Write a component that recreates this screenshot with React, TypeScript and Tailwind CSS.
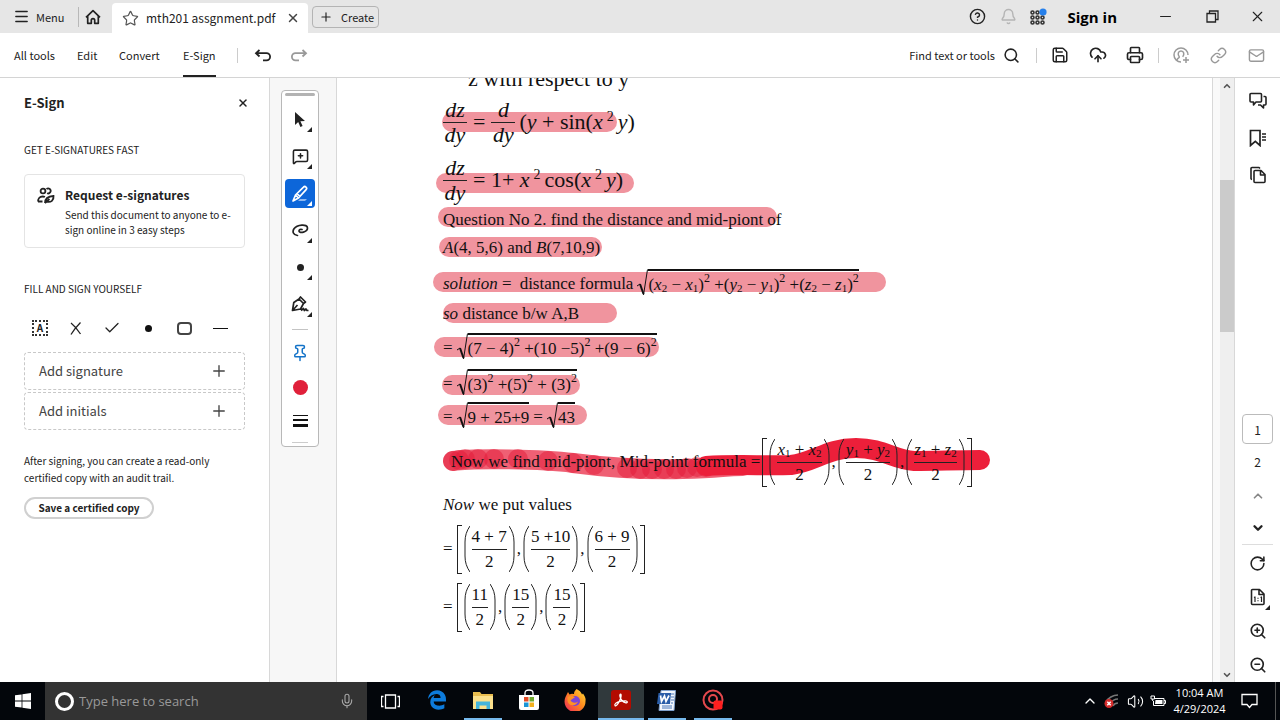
import type { ReactNode } from 'react'
import {
  Bell,
  Check,
  ChevronDown,
  ChevronUp,
  CircleHelp,
  CloudUpload,
  Link,
  Mail,
  Menu,
  MessageSquarePlus,
  Mic,
  Minus,
  Pin,
  Plus,
  Printer,
  RotateCw,
  Save,
  Search,
  Star,
  Volume2,
  X,
  ZoomIn,
  ZoomOut,
} from 'lucide-react'
import { FaEdgeLegacy } from 'react-icons/fa6'

const uiFont = "font-['Noto_Sans_CJK_SC','Open_Sans',sans-serif]"
const docFont = "font-['Liberation_Serif',serif]"

export default function App() {
  return (
    <div className={`flex min-h-screen flex-col bg-white text-[#222] ${uiFont}`}>
      <TitleBar />
      <Toolbar />
      <main className="flex flex-1">
        <SignPanel />
        <ToolPalette />
        <DocumentPage />
        <ScrollBar />
        <PageRail />
      </main>
      <Taskbar />
    </div>
  )
}

function TitleBar() {
  return (
    <header className="flex h-[33px] items-center whitespace-nowrap bg-[#e6e6e6]">
      <button className="flex w-[78px] items-center gap-[6px] pl-[13px] text-[11px] leading-4">
        <Menu size={17} />
        Menu
      </button>
      <span className="h-5 w-px bg-[#b8b8b8]" />
      <button aria-label="Home" className="flex w-[33px] justify-center pr-[5px]">
        <svg width="16" height="16" viewBox="0 0 16 16" fill="none" stroke="currentColor" strokeWidth="1.7" strokeLinejoin="round">
          <path d="M1 8.3 8 1.7l7 6.6M2.7 7v7.3h3.6v-3a1.7 1.7 0 0 1 3.4 0v3h3.6V7" />
        </svg>
      </button>
      <div className="flex h-[30px] w-[196px] items-center self-end rounded-t bg-white pl-[10px] pr-2">
        <Star size={17} strokeWidth={1.7} className="text-[#555]" />
        <span className="flex-1 pl-[7px] text-[12px] leading-4">mth201 assgnment.pdf</span>
        <button aria-label="Close tab">
          <X size={14} strokeWidth={2.5} className="text-[#444]" />
        </button>
      </div>
      <button className="ml-1 flex h-[22px] w-[67px] items-center gap-2 rounded border border-[#b4b4b4] pl-[6px] text-[11px] leading-4">
        <Plus size={14} />
        Create
      </button>
      <div className="ml-auto flex items-center">
        <button aria-label="Help" className="mr-[14px]"><CircleHelp size={17} /></button>
        <button aria-label="Notifications" className="mr-[13px]"><Bell size={17} className="text-[#b5b5b5]" /></button>
        <button aria-label="Apps" className="mr-5">
          <AppsIcon />
        </button>
        <button className="mr-10 font-['Open_Sans'] text-[15px] font-bold leading-5 text-black">Sign in</button>
        <button aria-label="Minimize" className="mr-8"><Minus size={17} strokeWidth={1.6} /></button>
        <button aria-label="Restore" className="mr-[30px]">
          <svg width="13" height="13" viewBox="0 0 13 13" fill="none" stroke="currentColor" strokeWidth="1.3">
            <path d="M1 3.5h8.5V12H1zM3.5 3V1H12v8.5H9.7" />
          </svg>
        </button>
        <button aria-label="Close" className="mr-[14px]"><X size={17} strokeWidth={1.6} /></button>
      </div>
    </header>
  )
}

function AppsIcon() {
  const dots = [3, 8, 13]
  return (
    <svg width="17" height="18" viewBox="0 0 17 18" fill="none" stroke="#333" strokeWidth="1.6">
      {dots.map((y) => dots.map((x) => <circle key={`${x}-${y}`} cx={x - 0.5} cy={y + 1.5} r="1.5" />))}
      <circle cx="13" cy="4" r="3.6" fill="#2680eb" stroke="none" />
    </svg>
  )
}

function Toolbar() {
  return (
    <nav className="flex h-[45px] items-center whitespace-nowrap border-b border-[#d4d4d4] pl-[14px] text-[11px] leading-4">
      <button className="w-[63px] text-left">All tools</button>
      <button className="w-[42px] text-left">Edit</button>
      <button className="w-16 text-left">Convert</button>
      <button className="h-full border-b-2 border-[#222] pt-[2px]">E-Sign</button>
      <span className="ml-[21px] h-[15px] w-px bg-[#ccc]" />
      <button aria-label="Undo" className="ml-4">
        <UndoIcon />
      </button>
      <button aria-label="Redo" className="ml-[18px] -scale-x-100 text-[#999]">
        <UndoIcon />
      </button>
      <button className="ml-auto flex items-center gap-2">
        Find text or tools
        <Search size={17} strokeWidth={2.2} />
      </button>
      <span className="ml-4 h-[15px] w-px bg-[#ccc]" />
      <button aria-label="Save" className="ml-[14px]"><Save size={18} /></button>
      <button aria-label="Upload" className="ml-5"><CloudUpload size={18} strokeWidth={2.2} /></button>
      <button aria-label="Print" className="ml-[19px]"><Printer size={18} strokeWidth={2.2} /></button>
      <span className="ml-[14px] h-[15px] w-px bg-[#ccc]" />
      <button aria-label="Invite" className="ml-[14px] text-[#999]">
        <svg width="17" height="17" viewBox="0 0 17 17" fill="none" stroke="currentColor" strokeWidth="1.5">
          <path d="M8 15A7 7 0 1 1 15 8M4 13.2c0-2 2.3-2 2.3-3.3C4.4 7.5 5 4 8 4s3.6 3.5 1.7 5.9M13 10v6M10 13h6" />
        </svg>
      </button>
      <button aria-label="Copy link" className="ml-5 text-[#999]"><Link size={17} /></button>
      <button aria-label="Email" className="ml-[21px] mr-[15px] text-[#999]"><Mail size={17} /></button>
    </nav>
  )
}

function UndoIcon() {
  return (
    <svg width="18" height="13" viewBox="0 0 18 13" fill="none" stroke="currentColor" strokeWidth="1.8">
      <path d="M5.5 1 2 4.2l3.5 3.3M2 4.2h10.500a3.6 3.6 0 0 1 0 7.2H9" />
    </svg>
  )
}

function SignPanel() {
  return (
    <aside className="flex w-[270px] shrink-0 flex-col whitespace-nowrap border-r border-[#d8d8d8] px-6">
      <div className="mt-4 flex h-[18px] items-center justify-between">
        <h2 className="text-[13px] font-bold leading-[18px]">E-Sign</h2>
        <button aria-label="Close panel" className="-mr-1"><X size={12} strokeWidth={3} /></button>
      </div>
      <h3 className="mt-[30px] text-[10px] leading-4">GET E-SIGNATURES FAST</h3>
      <button className="mt-4 flex h-[74px] items-start gap-[10px] rounded border border-[#e4e4e4] pl-3 pt-3 text-left">
        <PeopleIcon />
        <span>
          <strong className="block text-[12px] font-bold leading-4">Request e-signatures</strong>
          <span className="mt-1 block text-[10px] leading-[15px]">
            Send this document to anyone to e-
            <br />
            sign online in 3 easy steps
          </span>
        </span>
      </button>
      <h3 className="mt-[33px] text-[10px] leading-4">FILL AND SIGN YOURSELF</h3>
      <div className="mt-[21px] flex h-5 items-center">
        <FillButton label="Text">
          <span className="flex h-4 w-4 items-center justify-center border-2 border-dotted border-[#333] text-[10px] font-bold leading-3">A</span>
        </FillButton>
        <FillButton label="Cross">
          <svg width="12" height="13" viewBox="0 0 12 13" stroke="currentColor" strokeWidth="1.3" fill="none">
            <path d="M1 1q5 4 9.5 11M10.500.5Q5 6 1 12.500" />
          </svg>
        </FillButton>
        <FillButton label="Check mark"><Check size={18} strokeWidth={1.7} /></FillButton>
        <FillButton label="Dot"><span className="h-[7px] w-[7px] rounded-full bg-[#111]" /></FillButton>
        <FillButton label="Rounded box"><span className="h-[13px] w-[15px] rounded border-2 border-[#444]" /></FillButton>
        <FillButton label="Line"><span className="h-px w-[15px] bg-[#111]" /></FillButton>
      </div>
      <AddButton label="Add signature" className="mt-[14px]" />
      <AddButton label="Add initials" className="mt-[2px]" />
      <p className="mt-[22px] text-[10px] leading-[17px]">
        After signing, you can create a read-only
        <br />
        certified copy with an audit trail.
      </p>
      <button className="mt-[11px] h-[22px] w-[130px] rounded-full border-2 border-[#d0d0d0] text-[10px] font-bold leading-4">
        Save a certified copy
      </button>
    </aside>
  )
}

function FillButton({ label, children }: { label: string; children: ReactNode }) {
  return (
    <button aria-label={label} className="mr-1 flex w-8 shrink-0 items-center justify-center">
      {children}
    </button>
  )
}

function AddButton({ label, className }: { label: string; className: string }) {
  return (
    <button className={`flex h-[38px] items-center justify-between rounded border border-dashed border-[#c8c8c8] pl-[14px] pr-4 text-[13px] leading-4 text-[#444] ${className}`}>
      {label}
      <Plus size={18} strokeWidth={1.8} />
    </button>
  )
}

function PeopleIcon() {
  return (
    <svg width="18" height="17" viewBox="0 0 18 17" fill="none" stroke="currentColor" strokeWidth="1.8" className="shrink-0">
      <circle cx="6" cy="4" r="2.4" />
      <path d="M9.5 2a2.5 2.500 0 1 1 .6 4.200M1 14.500c0-3 2-5 4.500-5 1 0 1.800.2 2.400.6M1 14.500h4.500" />
      <path d="M8 16c0-4 2.500-6.500 8.500-7 .5 4.500-2.500 6.500-6.500 5.800M8 16l4.500-4" />
    </svg>
  )
}

function ToolPalette() {
  return (
    <div className="w-[66px] shrink-0 bg-[#f7f7f7] pl-[11px] pt-3">
      <div className="flex h-[357px] w-[38px] flex-col items-center rounded border border-[#b8b8b8] bg-white pt-[2px]">
        <span className="h-[3px] w-[30px] rounded-full bg-[#b3b3b3]" />
        <div className="mt-[5px] flex flex-col">
          <Tool label="Select">
            <svg width="12" height="16" viewBox="0 0 12 16" fill="currentColor">
              <path d="M1 0v13l3.200-3 2.200 5 2.200-1-2.200-4.800 4.600-.2z" />
            </svg>
          </Tool>
          <Tool label="Add comment"><MessageSquarePlus size={17} strokeWidth={2.2} /></Tool>
          <Tool label="Highlight" active>
            <svg width="18" height="18" viewBox="0 0 18 18" fill="none" stroke="currentColor" strokeWidth="1.7" strokeLinejoin="round">
              <path d="M9 14h7l-2 2H7z" fill="#8fb8f0" stroke="none" />
              <path d="M4.500 10 12.500 2.200a1.600 1.600 0 0 1 2.600 2.400L7.500 13zM4.500 10 2 16l5.500-3M6 8.700 9 11.500" />
            </svg>
          </Tool>
          <Tool label="Draw">
            <svg width="17" height="13" viewBox="0 0 17 13" fill="none" stroke="currentColor" strokeWidth="1.7" strokeLinecap="round">
              <path d="M5.500 11.500C1 11 .2 7.500 2 4.800 5 .5 15.500-.5 15.500 4c0 4-8 6-8.500 3 0-1.500 1.500-2 3-1.500" />
            </svg>
          </Tool>
          <Tool label="Dot"><span className="h-[7px] w-[7px] rounded-full bg-[#222]" /></Tool>
          <Tool label="Sign">
            <svg width="18" height="17" viewBox="0 0 18 17" fill="none" stroke="currentColor" strokeWidth="1.7" strokeLinejoin="round">
              <path d="m1.500 14.500 1.300-8L8 3l4.500 4.500L9.500 13zM8 3l1.500-2 5 5-2 1.500M1.500 14.500 6.500 9M10 14.500l2.500-2 .8 2 1.700-1.500 1 1.500h1.500" />
            </svg>
          </Tool>
        </div>
        <span className="mt-[6px] h-px w-4 bg-[#c4c4c4]" />
        <button aria-label="Pin" className="mt-[6px] flex h-[34px] items-center text-[#1473c8]">
          <Pin size={18} />
        </button>
        <button aria-label="Color" className="flex h-[34px] items-center">
          <span className="h-[15px] w-[15px] rounded-full bg-[#e0203a]" />
        </button>
        <button aria-label="Thickness" className="flex h-[34px] flex-col justify-center gap-[3px]">
          <span className="h-px w-[15px] bg-[#111]" />
          <span className="h-[2px] w-[15px] bg-[#111]" />
          <span className="h-[3px] w-[15px] bg-[#111]" />
        </button>
        <span className="mt-1 h-px w-4 bg-[#ccc]" />
      </div>
    </div>
  )
}

function Tool({ label, active, children }: { label: string; active?: boolean; children: ReactNode }) {
  return (
    <button
      aria-label={label}
      className={`relative my-1 flex h-[29px] w-[30px] items-center justify-center rounded-sm ${active ? 'bg-[#0d66d9] text-white' : ''}`}
    >
      {children}
      <Corner className="absolute bottom-[2px] right-[3px]" />
    </button>
  )
}

function Corner({ className }: { className: string }) {
  return (
    <svg width="5" height="5" viewBox="0 0 5 5" fill="currentColor" className={className}>
      <path d="M5 0v5H0z" />
    </svg>
  )
}

function DocumentPage() {
  return (
    <article className={`relative min-w-0 flex-1 overflow-hidden border-x border-[#d8d8d8] text-[17px] leading-5 text-[#111] ${docFont}`}>
      <Highlights />
      <div className="relative whitespace-nowrap pl-[106px]">
        <Row className="h-[14px] pl-[25px] text-[22px]">
          <span className="mb-3">z with respect to y</span>
        </Row>
        <Row className="h-[60px] text-[22px]">
          <Fraction top={<i>dz</i>} bottom={<i>dy</i>} className="w-6" />
          <span className="mx-[6px]">=</span>
          <Fraction top={<i>d</i>} bottom={<i>dy</i>} className="w-6" />
          <span className="ml-1">
            (<i>y</i> + sin(<i>x</i>
            <BigSup>2</BigSup>
            <i>y</i>)
          </span>
        </Row>
        <Row className="h-14 text-[22px]">
          <Fraction top={<i>dz</i>} bottom={<i>dy</i>} className="w-6" />
          <span className="ml-[6px]">
            = 1+ <i>x</i>
            <BigSup>2</BigSup>cos(<i>x</i>
            <BigSup>2</BigSup>
            <i>y</i>)
          </span>
        </Row>
        <Row className="h-6">Question No 2. find the distance and mid-piont of</Row>
        <Row className="h-8">
          <span>
            <i>A</i>(4, 5,6) and <i>B</i>(7,10,9)
          </span>
        </Row>
        <Row className="h-10">
          <span>
            <i>solution</i> =
          </span>
          <span className="ml-2 mr-1">distance formula</span>
          <Root>
            <Diff v="x" /> +<Diff v="y" /> +<Diff v="z" />
          </Root>
        </Row>
        <Row className="h-5">
          <span>
            <i>so</i> distance b/w A,B
          </span>
        </Row>
        <Row className="h-12">
          <span className="mr-1">=</span>
          <Root>
            (7 − 4)<Sup>2</Sup> +(10 −5)<Sup>2</Sup> +(9 − 6)<Sup>2</Sup>
          </Root>
        </Row>
        <Row className="h-6">
          <span className="mr-1">=</span>
          <Root>
            (3)<Sup>2</Sup> +(5)<Sup>2</Sup> + (3)<Sup>2</Sup>
          </Root>
        </Row>
        <Row className="h-[42px]">
          <span className="mr-1">=</span>
          <Root>9 + 25+9</Root>
          <span className="mx-1">=</span>
          <Root>43</Root>
        </Row>
        <Row className="h-12 pl-2">
          <span className="mr-[2px]">Now we find mid-piont, Mid-point formula =</span>
          <Triple items={[<Sum v="x" />, <Sum v="y" />, <Sum v="z" />]} />
        </Row>
        <Row className="h-[38px]">
          <span>
            <i>Now</i> we put values
          </span>
        </Row>
        <Row className="h-[50px]">
          <span className="mr-1">=</span>
          <Triple items={['4 + 7', '5 +10', '6 + 9']} />
        </Row>
        <Row className="h-[66px]">
          <span className="mr-1">=</span>
          <Triple items={['11', '15', '15']} />
        </Row>
      </div>
    </article>
  )
}

function Row({ className, children }: { className: string; children: ReactNode }) {
  return <div className={`flex items-center ${className}`}>{children}</div>
}

function Sup({ children }: { children: ReactNode }) {
  return <sup className="-top-2 text-[12px] leading-none">{children}</sup>
}

function BigSup({ children }: { children: ReactNode }) {
  return <sup className="-top-2 mx-1 text-[14px] leading-none">{children}</sup>
}

function Sub({ children }: { children: ReactNode }) {
  return <sub className="text-[11px] leading-none">{children}</sub>
}

// (v2 - v1) squared
function Diff({ v }: { v: string }) {
  return (
    <>
      (<i>{v}</i>
      <Sub>2</Sub> − <i>{v}</i>
      <Sub>1</Sub>)<Sup>2</Sup>
    </>
  )
}

function Sum({ v }: { v: string }) {
  return (
    <>
      <i>{v}</i>
      <Sub>1</Sub> + <i>{v}</i>
      <Sub>2</Sub>
    </>
  )
}

function Fraction({ top, bottom, className }: { top: ReactNode; bottom: ReactNode; className: string }) {
  return (
    <span className={`flex shrink-0 flex-col items-center ${className}`}>
      <span className="h-6 leading-6">{top}</span>
      <span className="h-px w-full bg-[#222]" />
      <span className="h-6 leading-6">{bottom}</span>
    </span>
  )
}

function Root({ children }: { children: ReactNode }) {
  return (
    <span className="mb-1 flex h-[27px]">
      <svg width="11" height="27" viewBox="0 0 11 27" fill="none" stroke="#111">
        <path d="m0 17 3-2" />
        <path d="m3 15 3.500 10" strokeWidth="2" />
        <path d="M6.500 26 10.500.5" />
      </svg>
      <span className="border-t-2 border-[#111] pt-1 leading-5">{children}</span>
    </span>
  )
}

function Triple({ items }: { items: ReactNode[] }) {
  return (
    <span className="flex items-center">
      <Bracket />
      {items.map((item, index) => (
        <span key={index} className="flex items-center">
          <Paren />
          <Fraction top={item} bottom="2" className="mx-[2px]" />
          <Paren flip />
          {index < items.length - 1 && <span className="mx-[2px]">,</span>}
        </span>
      ))}
      <Bracket flip />
    </span>
  )
}

function Bracket({ flip }: { flip?: boolean }) {
  return <span className={`h-[49px] w-[5px] border-y border-[#222] ${flip ? 'ml-[2px] border-r' : 'mr-[2px] border-l'}`} />
}

function Paren({ flip }: { flip?: boolean }) {
  return (
    <svg width="6" height="48" viewBox="0 0 6 48" fill="none" stroke="#222" className={flip ? '-scale-x-100' : ''}>
      <path d="M6 1C2.500 6 1 11 1 17v14c0 6 1.500 11 5 16" />
    </svg>
  )
}

const marks = [
  { x1: 442, x2: 617, y: 122 },
  { x1: 436, x2: 634, y: 183 },
  { x1: 438, x2: 777, y: 217 },
  { x1: 439, x2: 602, y: 247 },
  { x1: 433, x2: 886, y: 282 },
  { x1: 443, x2: 617, y: 313 },
  { x1: 434, x2: 659, y: 347 },
  { x1: 442, x2: 580, y: 385 },
  { x1: 438, x2: 587, y: 415 },
]

const dabs = [
  [453, 461], [459, 460], [465, 459], [478, 459], [494, 459], [518, 459], [548, 461], [573, 463], [594, 465],
  [627, 468], [640, 469], [652, 469], [664, 469], [676, 469], [687, 468], [697, 467], [706, 467],
]

// Freehand marker strokes, drawn in window coordinates
function Highlights() {
  return (
    <svg width="876" height="604" viewBox="337 78 876 604" fill="none" strokeLinecap="round" strokeLinejoin="round" className="absolute left-0 top-0">
      {marks.map((mark) => (
        <path key={mark.y} d={`M${mark.x1 + 10} ${mark.y}H${mark.x2 - 10}`} stroke="#f0949e" strokeWidth="20" />
      ))}
      <path d="M453 461c20-3 90-2 120 2s70 7 110 6 40-3 60-3" stroke="#ef6074" strokeWidth="20" />
      {dabs.map(([x, y]) => (
        <circle key={x} cx={x} cy={y} r="10" fill="#e31937" fillOpacity="0.5" />
      ))}
      <path d="M706 466c30-2 60 0 85-1 24-3 36-17 65-17 27 0 38 12 58 13 20 0 45-1 66-1" stroke="#ec1f3a" strokeWidth="20" />
    </svg>
  )
}

function ScrollBar() {
  return (
    <div className="flex w-[22px] shrink-0 border-r border-[#d8d8d8] bg-[#f9f9f9] pl-[7px]">
      <div className="flex w-[14px] flex-col items-center bg-[#efefef] pb-[2px] pt-[3px]">
        <ChevronUp size={10} strokeWidth={4} className="text-[#555]" />
        <span className="mt-[89px] h-[152px] w-full bg-[#cbcbcb]" />
        <ChevronDown size={10} strokeWidth={4} className="mt-auto text-[#555]" />
      </div>
    </div>
  )
}

function PageRail() {
  return (
    <aside className="flex w-[45px] shrink-0 flex-col items-center text-[12px]">
      <div className="flex flex-col items-center gap-[19px] pt-[14px]">
        <button aria-label="Comments">
          <svg width="18" height="18" viewBox="0 0 18 18" fill="none" stroke="currentColor" strokeWidth="1.6" strokeLinejoin="round">
            <path d="M2 1.500h9.500a1 1 0 0 1 1 1V9a1 1 0 0 1-1 1H7l-2.500 3V10H2a1 1 0 0 1-1-1V2.500a1 1 0 0 1 1-1z" />
            <path d="M14.500 4.500H16a1 1 0 0 1 1 1V12a1 1 0 0 1-1 1h-1.500v3l-3-3H9" />
          </svg>
        </button>
        <button aria-label="Bookmarks">
          <svg width="18" height="18" viewBox="0 0 18 18" fill="none" stroke="currentColor" strokeWidth="1.7">
            <path d="M1.500 1.500h9.500v15l-4.700-4.200-4.800 4.200z" />
            <path d="M13 5h4M13 8h4M13 11h4" strokeWidth="1.3" />
          </svg>
        </button>
        <button aria-label="Pages">
          <svg width="18" height="18" viewBox="0 0 18 18" fill="none" stroke="currentColor" strokeWidth="1.6" strokeLinejoin="round">
            <path d="M6 4.500h6l4 4v7a1 1 0 0 1-1 1H6a1 1 0 0 1-1-1v-10a1 1 0 0 1 1-1zM11.500 5v4H16" />
            <path d="M3 13.500a1.300 1.300 0 0 1-1-1V2.500a1 1 0 0 1 1-1h7l1 1" />
          </svg>
        </button>
      </div>
      <input aria-label="Page number" defaultValue="1" className="mt-auto block h-[30px] w-[31px] rounded border border-[#bbb] text-center leading-4 outline-none" />
      <span className="mt-[10px] leading-4">2</span>
      <button aria-label="Previous page" className="mt-[19px] text-[#888]"><ChevronUp size={14} strokeWidth={3} /></button>
      <button aria-label="Next page" className="mt-[18px]"><ChevronDown size={14} strokeWidth={4} /></button>
      <span className="mt-[9px] h-px w-[31px] bg-[#ddd]" />
      <button aria-label="Rotate" className="mt-[10px]"><RotateCw size={17} strokeWidth={2.2} /></button>
      <button aria-label="Actual size" className="relative mt-4">
        <svg width="16" height="18" viewBox="0 0 16 18" fill="none" stroke="currentColor" strokeWidth="1.6" strokeLinejoin="round">
          <path d="M2.500 1.500h7l4.500 4.500v9.500a1 1 0 0 1-1 1H2.500a1 1 0 0 1-1-1v-13a1 1 0 0 1 1-1zM9 2v4.500h4.500" />
          <path d="M4 9.500 5 9v5M10.500 9.500l1-.5v5M8 9.700v1M8 12.300v1" strokeWidth="1.2" />
        </svg>
        <Corner className="absolute -bottom-1 -right-1" />
      </button>
      <button aria-label="Zoom in" className="mt-4"><ZoomIn size={18} strokeWidth={2.2} /></button>
      <button aria-label="Zoom out" className="mb-2 mt-4"><ZoomOut size={18} strokeWidth={2.2} /></button>
    </aside>
  )
}

function Taskbar() {
  return (
    <footer className="flex h-[38px] items-stretch bg-[#03060b] font-['Open_Sans','Noto_Sans',sans-serif] text-white">
      <button aria-label="Start" className="flex w-[45px] items-center justify-center">
        <svg width="16" height="16" viewBox="0 0 16 16" fill="#fff">
          <path d="M0 2.300 6.600 1.400v6.200H0zM7.400 1.300 16 0v7.600H7.400zM0 8.400h6.600v6.200L0 13.700zM7.400 8.400H16V16l-8.600-1.200z" />
        </svg>
      </button>
      <label className="flex w-[322px] items-center bg-[#333] pl-[10px] pr-3">
        <span className="h-[19px] w-[19px] rounded-full border-[3px] border-white" />
        <input aria-label="Search" placeholder="Type here to search" className="ml-[5px] min-w-0 flex-1 bg-transparent text-[13px] leading-5 outline-none placeholder:text-[#999]" />
        <Mic size={16} strokeWidth={1.6} className="text-[#aaa]" />
      </label>
      <button aria-label="Task view" className="flex w-[47px] items-center justify-center">
        <svg width="19" height="15" viewBox="0 0 19 15" fill="none" stroke="#fff" strokeWidth="1.3">
          <path d="M4.500 1h10v13h-10zM2.500 2.500h-2v10h2M16.500 2.500h2v10h-2" />
        </svg>
      </button>
      <TaskApp label="Edge"><FaEdgeLegacy size={20} className="text-[#0d7bdc]" /></TaskApp>
      <TaskApp label="File Explorer" open>
        <svg width="22" height="20" viewBox="0 0 22 20">
          <path d="M1 2h7l1.500 2H21v15H1z" fill="#e9bd4f" />
          <path d="M1 6h20v13H1z" fill="#fbe08c" />
          <path d="M4 19v-7.500h14V19h-3.500v-3.500h-7V19z" fill="#45b5dc" />
        </svg>
      </TaskApp>
      <TaskApp label="Store">
        <svg width="22" height="22" viewBox="0 0 22 22">
          <path d="M7 7V4q0-3 4-3t4 3v3" fill="none" stroke="#fff" strokeWidth="1.3" />
          <path d="M1 6h20v13q0 2-2 2H3q-2 0-2-2z" fill="#fff" />
          <path d="M6 8h4.500v4.500H6z" fill="#e24b26" />
          <path d="M11.500 8H16v4.500h-4.500z" fill="#6ea82d" />
          <path d="M6 13.500h4.500V18H6z" fill="#1a94d6" />
          <path d="M11.500 13.500H16V18h-4.500z" fill="#f2b01e" />
        </svg>
      </TaskApp>
      <TaskApp label="Firefox">
        <svg width="22" height="22" viewBox="0 0 22 22">
          <defs>
            <linearGradient id="fox" x1="1" y1="0" x2="0" y2="1">
              <stop offset="0" stopColor="#ffe03a" />
              <stop offset="0.45" stopColor="#ff8a1e" />
              <stop offset="1" stopColor="#f0245c" />
            </linearGradient>
          </defs>
          <path d="M12.500 0c4 2 4.500 3.500 5.500 5.500l1-1C21 7.500 22 9.500 21.500 12A10.500 10.500 0 1 1 1.500 8L4 3l1.500 2.500C8 4 9.500 5 10 5c0-2 1-3.500 2.500-5z" fill="url(#fox)" />
          <circle cx="11" cy="12" r="5" fill="#7b45d8" />
          <path d="M3.500 8c3-2 5.500-1.500 7.500.5-2 .5-2.500 2-4.500 2.500 1 3 5 3.500 7.500 1.500-1.500 5-9.500 5-10.500-.5z" fill="#ff9126" />
        </svg>
      </TaskApp>
      <TaskApp label="Acrobat" open active>
        <svg width="20" height="20" viewBox="0 0 20 20">
          <rect width="20" height="20" rx="3" fill="#b30b00" />
          <path d="M4 15.500c-1-1.500 2-3.500 6-4.300s6.500-.2 6.300 1c-.3 1.300-3.500.3-5.300-1.700S8.200 5 9.200 4.200c1.300-.7 1.300 2.800-.7 6.800S4.800 16.500 4 15.500z" fill="none" stroke="#fff" strokeWidth="1.3" />
        </svg>
      </TaskApp>
      <TaskApp label="Word" open>
        <svg width="22" height="21" viewBox="0 0 22 21">
          <path d="M5 .5h14.500l-1.500 20H3z" fill="#f3f7fd" stroke="#7f9fcb" />
          <path d="M15 4h3M15 7h3M15 10h3M15 13h2M6 16h10M6 18h10" stroke="#4b77b8" />
          <path d="M2.500 3H15l-1 11H1z" fill="#2a5da8" />
          <path d="m4.500 5.500 1 6 3-5.500 1.500 5.500 3-6" fill="none" stroke="#fff" strokeWidth="1.7" />
        </svg>
      </TaskApp>
      <TaskApp label="Recorder" open>
        <svg width="23" height="23" viewBox="0 0 23 23" fill="none" stroke="#e5484d" strokeWidth="2">
          <circle cx="11" cy="11" r="9.500" />
          <circle cx="11" cy="10" r="4" />
          <rect x="11.500" y="11.500" width="9" height="9" rx="2" fill="#ff1f1f" stroke="none" />
        </svg>
      </TaskApp>
      <div className="ml-auto flex items-center">
        <ChevronUp size={16} />
        <svg width="16" height="16" viewBox="0 0 16 16" fill="none" stroke="#777" strokeWidth="1.5" className="ml-[6px]">
          <path d="M2 9C4 5 9 2 14 2M6 11c1-3 5-5 8-5M9 13c1-2 3-3 5-3" />
          <circle cx="5" cy="10.500" r="4.500" fill="#d42b2b" stroke="none" />
          <path d="m3.300 8.800 3.400 3.400M6.700 8.800l-3.400 3.400" stroke="#fff" />
        </svg>
        <Volume2 size={17} strokeWidth={1.5} className="ml-[7px]" />
        <svg width="16" height="12" viewBox="0 0 16 12" fill="none" stroke="#fff" className="ml-[6px]">
          <path d="M5 3.500h9v7H3.500V6M1 1h3.500v3H1zM2.700 4v2M14 5.500h1.500v3H14" />
          <path d="M5.500 5h7v4H5z" fill="#fff" stroke="none" />
        </svg>
        <div className="ml-2 flex w-[51px] flex-col items-center whitespace-nowrap text-[11px] leading-4">
          <span>10:04 AM</span>
          <span>4/29/2024</span>
        </div>
        <svg width="17" height="16" viewBox="0 0 17 16" fill="none" stroke="#fff" strokeWidth="1.3" className="ml-4">
          <path d="M1 1.500h15v10h-5l-2.500 3-2.500-3H1z" />
        </svg>
        <span className="ml-[17px] mr-1 h-[38px] w-px bg-[#555]" />
      </div>
    </footer>
  )
}

function TaskApp({ label, open, active, children }: { label: string; open?: boolean; active?: boolean; children: ReactNode }) {
  return (
    <button
      aria-label={label}
      className={`flex w-[46px] flex-col items-center ${active ? 'bg-[#30393c]' : ''}`}
    >
      <span className="flex flex-1 items-center">{children}</span>
      <span className={`h-[2px] ${active ? 'w-full' : 'w-[38px]'} ${open ? 'bg-[#76b9ed]' : ''}`} />
    </button>
  )
}
